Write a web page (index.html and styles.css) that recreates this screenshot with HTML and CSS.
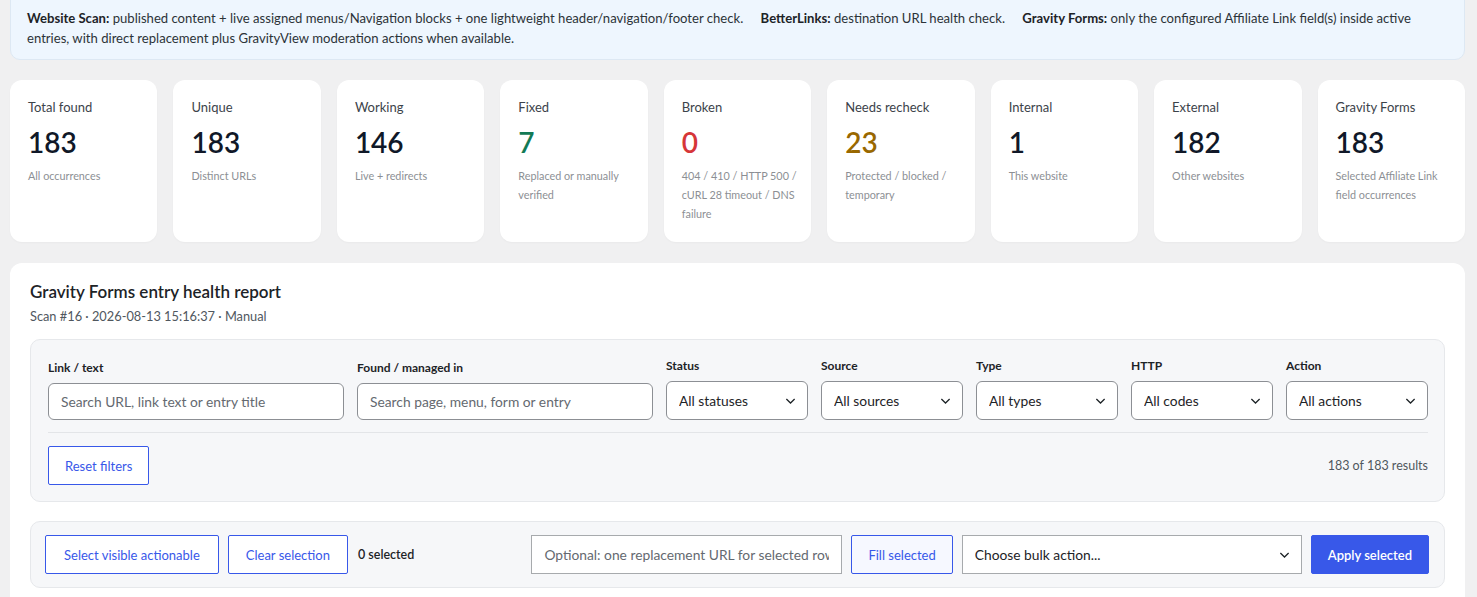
FILE: index.html
```html
<!DOCTYPE html>
<html lang="en">
<head>
    <meta charset="UTF-8">
    <title>Link health</title>
    <link rel="stylesheet" href="styles.css">
</head>
<body>
    <div class="wrap">
        <div class="notice">
            <b>Website Scan:</b> published content + live assigned menus/Navigation blocks + one lightweight header/navigation/footer check. <span class="sp"></span><b>BetterLinks:</b> destination URL health check. <span class="sp"></span><b>Gravity Forms:</b> only the configured Affiliate Link field(s) inside active entries, with direct replacement plus GravityView moderation actions when available.
        </div>

        <div class="stats">
            <div class="stat"><div class="stat-label">Total found</div><div class="stat-num">183</div><div class="stat-sub">All occurrences</div></div>
            <div class="stat"><div class="stat-label">Unique</div><div class="stat-num">183</div><div class="stat-sub">Distinct URLs</div></div>
            <div class="stat"><div class="stat-label">Working</div><div class="stat-num">146</div><div class="stat-sub">Live + redirects</div></div>
            <div class="stat"><div class="stat-label">Fixed</div><div class="stat-num green">7</div><div class="stat-sub">Replaced or manually verified</div></div>
            <div class="stat"><div class="stat-label">Broken</div><div class="stat-num red">0</div><div class="stat-sub">404 / 410 / HTTP 500 / cURL 28 timeout / DNS failure</div></div>
            <div class="stat"><div class="stat-label">Needs recheck</div><div class="stat-num amber">23</div><div class="stat-sub">Protected / blocked / temporary</div></div>
            <div class="stat"><div class="stat-label">Internal</div><div class="stat-num">1</div><div class="stat-sub">This website</div></div>
            <div class="stat"><div class="stat-label">External</div><div class="stat-num">182</div><div class="stat-sub">Other websites</div></div>
            <div class="stat"><div class="stat-label">Gravity Forms</div><div class="stat-num">183</div><div class="stat-sub">Selected Affiliate Link field occurrences</div></div>
        </div>

        <div class="panel">
            <h2>Gravity Forms entry health report</h2>
            <div class="meta">Scan #16 · 2026-08-13 15:16:37 · Manual</div>

            <div class="filters">
                <div class="filter-row">
                    <label class="field">
                        <span>Link / text</span>
                        <input type="text" placeholder="Search URL, link text or entry title">
                    </label>
                    <label class="field">
                        <span>Found / managed in</span>
                        <input type="text" placeholder="Search page, menu, form or entry">
                    </label>
                    <label class="field">
                        <span>Status</span>
                        <div class="select"><select><option>All statuses</option></select><svg viewBox="0 0 12 8"><path d="M1.5 1.8 6 6.2l4.5-4.4"/></svg></div>
                    </label>
                    <label class="field">
                        <span>Source</span>
                        <div class="select"><select><option>All sources</option></select><svg viewBox="0 0 12 8"><path d="M1.5 1.8 6 6.2l4.5-4.4"/></svg></div>
                    </label>
                    <label class="field">
                        <span>Type</span>
                        <div class="select"><select><option>All types</option></select><svg viewBox="0 0 12 8"><path d="M1.5 1.8 6 6.2l4.5-4.4"/></svg></div>
                    </label>
                    <label class="field">
                        <span>HTTP</span>
                        <div class="select"><select><option>All codes</option></select><svg viewBox="0 0 12 8"><path d="M1.5 1.8 6 6.2l4.5-4.4"/></svg></div>
                    </label>
                    <label class="field">
                        <span>Action</span>
                        <div class="select"><select><option>All actions</option></select><svg viewBox="0 0 12 8"><path d="M1.5 1.8 6 6.2l4.5-4.4"/></svg></div>
                    </label>
                </div>
                <div class="filter-foot">
                    <button class="btn">Reset filters</button>
                    <span class="count">183 of 183 results</span>
                </div>
            </div>

            <div class="bulk">
                <button class="btn btn-wide">Select visible actionable</button>
                <button class="btn btn-clear">Clear selection</button>
                <span class="selected">0 selected</span>
                <input class="repl" type="text" placeholder="Optional: one replacement URL for selected rows">
                <button class="btn btn-soft">Fill selected</button>
                <div class="select bulk-select"><select><option>Choose bulk action...</option></select><svg viewBox="0 0 12 8"><path d="M1.5 1.8 6 6.2l4.5-4.4"/></svg></div>
                <button class="btn btn-primary">Apply selected</button>
            </div>
        </div>
    </div>
</body>
</html>
```

FILE: styles.css
```css
body{
    margin: 0;
    background: #f0f0f1;
    font-family: "Lato", "Liberation Sans", sans-serif;
    color: #1d2327;
}
.wrap{
    padding: 0 12px 0 10px;
}
.notice{
    margin-top: -6px;
    padding: 13px 16px 11px;
    background: #eef6fe;
    border: 1px solid #dde8f3;
    border-radius: 0 0 10px 10px;
    font-size: 13.1px;
    line-height: 20px;
    color: #2c3338;
}
.notice b{
    font-weight: 700;
    color: #1d2327;
}
.sp{
    display: inline-block;
    width: 14px;
}

.stats{
    display: grid;
    grid-template-columns: repeat(9, 1fr);
    gap: 16px;
    margin-top: 20px;
}
.stat{
    background: #fff;
    border-radius: 12px;
    padding: 18px 10px 19px 18px;
    box-shadow: 0 1px 2px rgba(0,0,0,0.03);
}
.stat-label{
    font-size: 13px;
    line-height: 18px;
    color: #3c434a;
    font-weight: 400;
}
.stat-num{
    font-size: 28px;
    line-height: 36px;
    margin-top: 8px;
    font-weight: 600;
    color: #101828;
}
.stat-num.green{ color: #137a55; }
.stat-num.red{ color: #d63638; }
.stat-num.amber{ color: #996800; }
.stat-sub{
    margin-top: 6px;
    font-size: 10.8px;
    line-height: 19px;
    color: #8c8f94;
}

.panel{
    margin-top: 21px;
    background: #fff;
    border-radius: 12px;
    padding: 18px 20px 20px;
    min-height: 400px;
}
.panel h2{
    margin: 0;
    font-size: 17px;
    line-height: 22px;
    font-weight: 600;
    color: #1d2327;
}
.meta{
    margin-top: 5px;
    font-size: 12.8px;
    line-height: 17px;
    color: #50575e;
}

.filters{
    margin-top: 14px;
    background: #f6f7f9;
    border: 1px solid #e6e8eb;
    border-radius: 10px;
    padding: 18px 16px 16px 17px;
}
.filter-row{
    display: grid;
    grid-template-columns: 296fr 296fr 142fr 142fr 142fr 142fr 142fr;
    gap: 13px;
    align-items: end;
    padding-bottom: 12px;
    border-bottom: 1px solid #e3e5e8;
}
.field{
    display: flex;
    flex-direction: column;
}
.field span{
    font-size: 12px;
    line-height: 16px;
    font-weight: 700;
    color: #1d2327;
    margin-bottom: 7px;
}
input[type=text]{
    font-family: inherit;
    font-size: 13.8px;
    height: 37px;
    box-sizing: border-box;
    border: 1px solid #8c8f94;
    border-radius: 6px;
    padding: 0 12px;
    background: #fff;
    color: #1d2327;
    outline: none;
}
input::placeholder{
    color: #646970;
}
.select{
    position: relative;
}
.select select{
    appearance: none;
    -webkit-appearance: none;
    width: 100%;
    height: 39px;
    box-sizing: border-box;
    border: 1px solid #8c8f94;
    border-radius: 6px;
    padding: 0 30px 0 12px;
    background: #fff;
    font-family: inherit;
    font-size: 13.8px;
    color: #1d2327;
}
.select svg{
    position: absolute;
    right: 12px;
    top: 50%;
    width: 11px;
    height: 8px;
    margin-top: -4px;
    fill: none;
    stroke: #1d2327;
    stroke-width: 1.4;
    pointer-events: none;
}

.filter-foot{
    display: flex;
    justify-content: space-between;
    align-items: center;
    padding-top: 13px;
}
.count{
    font-size: 12.5px;
    color: #50575e;
}

.btn{
    height: 39px;
    padding: 0 16px;
    background: #fff;
    border: 1px solid #3858e9;
    border-radius: 2px;
    color: #3858e9;
    font-family: inherit;
    font-size: 13px;
    cursor: pointer;
}
.btn-wide{
    padding: 0 18px;
}
.btn-clear{
    padding: 0 17px;
}
.btn-soft{
    background: #f6f8ff;
}
.btn-primary{
    background: #3858e9;
    color: #fff;
    font-weight: 600;
}

.bulk{
    margin-top: 19px;
    display: flex;
    align-items: center;
    gap: 9px;
    background: #f6f7f9;
    border: 1px solid #e6e8eb;
    border-radius: 10px;
    padding: 13px 15px 13px 14px;
}
.selected{
    margin-left: 1px;
    font-size: 12.5px;
    font-weight: 600;
    color: #1d2327;
    flex: 1;
}
.bulk .repl{
    width: 311px;
    height: 39px;
    border-radius: 0;
    border-color: #a7aaad;
}
.bulk-select{
    width: 340px;
}
.bulk-select select{
    border-radius: 0;
    border-color: #a7aaad;
}
```
